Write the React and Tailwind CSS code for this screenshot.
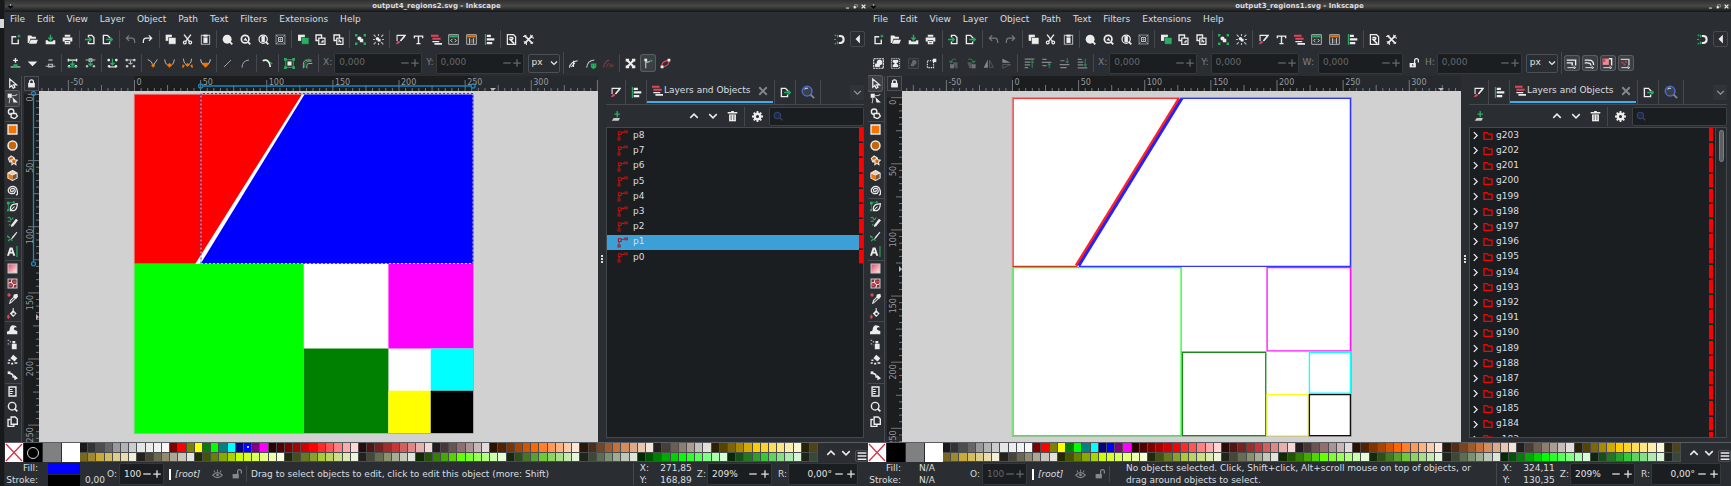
import React from "react";

const W = "#ececec";
const G = "#27ae60";
const R = "#e0455a";
const O = "#f67400";
const D = "#777b7f";

const mag = (
  <path d="M11 11l4 4" stroke={W} strokeWidth="2.6" />
);
const chain = (c) => (
  <g fill={c}>
    <circle cx="3" cy="12" r="1.8" />
    <circle cx="13" cy="12" r="1.8" />
  </g>
);

const ICONS = {
  new: <><path d="M9 4H3v10h9V8" stroke={W} strokeWidth="2" /><path d="M13 0l1 2 2 1-2 1-1 2-1-2-2-1 2-1z" fill={G} /></>,
  open: <><path d="M1 13V2h5l2 2h5v3H5l-2 6z" fill={W} /><path d="M5.500 8.500H16L13.500 14H3z" fill={W} /></>,
  save: <><path d="M8 1v6M5 5l3 3.500L11 5" stroke={G} strokeWidth="2" /><path d="M1 9h3l1 2h6l1-2h3v6H1z" fill={W} /></>,
  print: <><path d="M4 1h8v3H4z M1 5h14v6h-3V9H4v2H1z M4 10h8v5H4z" fill={W} /><path d="M6 12.500h4" stroke="#2a2e32" /></>,
  import: <><path d="M5 5V2h5l3 3v9H5v-3" stroke={W} strokeWidth="2" /><path d="M0 8h8M6 5l3 3-3 3" stroke={G} strokeWidth="2" /></>,
  export: <><path d="M11 6V5L8 2H2v12h9v-3" stroke={W} strokeWidth="2" /><path d="M6 8h8M12 5l3 3-3 3" stroke={G} strokeWidth="2" /></>,
  undo: <path d="M2 6h8q4 0 4 5v2 M6 2L2 6l4 4" stroke={D} strokeWidth="1.800" />,
  redo: <path d="M14 6H6q-4 0-4 5v2 M10 2l4 4-4 4" stroke={W} strokeWidth="1.800" />,
  redoOff: <path d="M14 6H6q-4 0-4 5v2 M10 2l4 4-4 4" stroke={D} strokeWidth="1.800" />,
  copy: <><path d="M1 1h9v9H1z" fill={W} /><path d="M5 5h11v10H5z" fill={W} stroke="#2a2e32" /></>,
  cut: <><path d="M3 1l8 10M13 1L5 11" stroke={W} strokeWidth="2" /><circle cx="4" cy="12.500" r="2" stroke={W} strokeWidth="1.800" /><circle cx="12" cy="12.500" r="2" stroke={W} strokeWidth="1.800" /></>,
  paste: <><path d="M2 2h12v13H2z" stroke="#b0b2b4" strokeWidth="1.600" /><path d="M5 1h6v3H5z" fill={W} /><path d="M5 5h6v8H5z" fill={W} /></>,
  zoomSel: <><circle cx="7.500" cy="7.500" r="6.500" fill={W} />{mag}</>,
  zoomDraw: <><circle cx="7.500" cy="7.500" r="5.500" stroke={W} strokeWidth="2.500" /><path d="M5 9l3-4 3 5z" fill={W} />{mag}</>,
  zoomPage: <><circle cx="7.500" cy="7.500" r="6" stroke={W} strokeWidth="1.800" /><path d="M5 3h5v9H5z" fill={W} />{mag}</>,
  zoomCenter: <><path d="M1.500 1.500h13v13h-13z" stroke="#b0b2b4" /><path d="M5 5h6v6H5z" stroke={W} strokeWidth="1.200" /><path d="M1 1l3 3M15 1l-3 3M1 15l3-3M15 15l-3-3M8 6v4M6 8h4" stroke="#b0b2b4" /></>,
  dup: <><path d="M0 1h10v9H0z" fill={W} /><path d="M5 5h11v10H5z" fill={G} stroke="#2a2e32" /></>,
  clone: <><path d="M1.500 1.500h8v8h-8z" stroke={W} strokeWidth="2" /><path d="M5.500 6h9v9h-9z" fill="#2a2e32" stroke={W} strokeWidth="1.800" /><path d="M9 12l3-3v3z" fill={W} stroke={W} /></>,
  unlink: <><path d="M1.500 1.500h8v8h-8z" stroke={W} strokeWidth="2" /><path d="M5.500 6h9v9h-9z" fill="#2a2e32" stroke={W} strokeWidth="1.800" /><path d="M8 8l4 4M8 12l1-1" stroke={W} strokeWidth="2" /></>,
  group: <><path d="M0 0h3.500v3.500H0zM12.500 0H16v3.500h-3.500zM0 12.500h3.500V16H0zM12.500 12.500H16V16h-3.500z" fill={G} /><circle cx="6.500" cy="6.500" r="3" fill={W} /><path d="M7 7h5v5H7z" fill={W} /></>,
  ungroup: <><path d="M1 1l3 3M15 1l-3 3M15 15l-3-3M1 15l3-3M8 0v3M0 8h3M13 8h3M8 13v3" stroke="#b8babc" strokeWidth="1.600" /><circle cx="6.500" cy="7" r="2.500" fill={W} /><path d="M7 7h4v4H7z" fill={W} /></>,
  fill: <><path d="M3 10V2h12l-7 8" stroke={W} strokeWidth="1.600" /><path d="M8 10l6-7" stroke={W} strokeWidth="2.200" /><path d="M1 15l3-5 4 1q-2 4-7 4z" fill={R} /></>,
  text: <path d="M1 2h14v4h-2V4H9v9h2v2H5v-2h2V4H3v2H1z" fill={W} />,
  layers: <><path d="M0 1h11v3H0z M2 5.500h12v3H2z" fill={R} /><path d="M2 10h10v2H2z M5 13h11v2.500H5z" fill={W} /></>,
  xml: <><path d="M1 1h14v14H1z" stroke="#b8babc" strokeWidth="1.400" /><path d="M2 2h12v3H2z" fill={G} /><path d="M6.500 7L4 9.500 6.500 12M9.500 7L12 9.500 9.500 12" stroke={W} strokeWidth="1.300" /></>,
  doc: <><path d="M1 1h14v14H1z" stroke="#b8babc" strokeWidth="1.400" /><path d="M2 2h12v3H2z" fill={O} /><path d="M5 6v8M11 6v8" stroke={W} strokeWidth="1.200" /><path d="M6 7h4v6H6z" fill="#54585c" /></>,
  align: <><path d="M2 0v16" stroke={G} strokeWidth="1.600" /><path d="M4 1h6v3.500H4z M4 6h11v3.500H4z M4 11.500h8V15H4z" fill={W} /></>,
  prefs: <><path d="M2 1h9l3 3v11H2z" stroke={W} strokeWidth="1.800" /><path d="M5 5h4q2 1 0 3H6l6 6" stroke={W} strokeWidth="2.200" /></>,
  tools: <><path d="M2 2l12 12M14 2L2 14" stroke={W} strokeWidth="2.400" /><path d="M0 4l5-2M11 1l1 4 4 1M1 11l4 1v4M11 14l4-2" stroke={W} strokeWidth="1.400" /></>,
  snap: <><path d="M7 3h2q5 0 5 5t-5 5H7" stroke={W} strokeWidth="3" /><path d="M1 1l2 2M0 8h3M1 15l2-2M5 1v4M5 11v4" stroke={G} strokeWidth="1.600" /></>,
  left: <path d="M11 1v14L4 8z" fill={W} />,
  nodeAdd: <><path d="M8 0v7M4.500 3.500h7" stroke={W} strokeWidth="2" /><path d="M1 13h14" stroke={W} strokeWidth="1.400" /><path d="M5 9h6v5H5z" fill={G} /></>,
  tri: <path d="M1 5h14l-7 7z" fill={W} />,
  nodeDel: <><path d="M5 3h6" stroke="#b8babc" strokeWidth="1.800" /><path d="M1 12h14M5 9h6v4H5z" stroke="#b8babc" strokeWidth="1.600" /></>,
  join: <><path d="M1 3h14M2 1v4M14 1v4" stroke={W} strokeWidth="2" /><path d="M8 4v7M5 8l3 3 3-3" stroke={G} strokeWidth="2" />{chain(W)}<path d="M1 13h14" stroke={G} strokeWidth="1.600" /></>,
  breakN: <><path d="M1 3h14M6 1h4v4H6z" stroke="#b8babc" strokeWidth="1.600" /><path d="M8 4v7M5 8l3 3 3-3" stroke={G} strokeWidth="1.800" />{chain("#b8babc")}</>,
  joinSeg: <><g fill={W}><circle cx="2.500" cy="3" r="2" /><circle cx="13.500" cy="3" r="2" /></g><path d="M8 1v9M5 7l3 3 3-3" stroke={G} strokeWidth="1.800" />{chain(W)}<path d="M3 13h10" stroke={W} strokeWidth="1.600" /></>,
  delSeg: <><g fill="#c8cacc"><circle cx="2.500" cy="3" r="2" /><circle cx="13.500" cy="3" r="2" /></g><path d="M3 3h10M8 4v5M5 7l3 2 3-2" stroke="#b8babc" strokeWidth="1.500" />{chain("#c8cacc")}</>,
  cusp: <><path d="M1 2q6 2 8 9l6-9" stroke="#b8babc" strokeWidth="1.400" /><path d="M9 8l3 3-3 3-3-3z" fill={O} /></>,
  smooth: <><path d="M1 2q1 9 7 9t7-9" stroke="#b8babc" strokeWidth="1.400" /><path d="M8 7l3.500 3.500L8 14l-3.500-3.500z" fill={O} /></>,
  sym: <><path d="M2 1q1 9 6 9t6-9" stroke="#b8babc" strokeWidth="1.400" /><path d="M8 7l3 3-3 3-3-3zM1 9l3 2-2 3H0zM15 9l-3 2 2 3h2z" fill={O} /></>,
  auto: <><path d="M1 2q1 8 7 8t7-8" stroke="#d8dadc" strokeWidth="1.400" /><path d="M8 14L3 9l2-2h6l2 2z" fill={O} /></>,
  line: <path d="M3 13L13 3" stroke="#a8aaac" strokeWidth="1.400" />,
  curve: <path d="M3 14Q3 4 13 3" stroke="#a8aaac" strokeWidth="1.400" />,
  corner: <><path d="M1 4q5-2 8 1t3 8" stroke={W} strokeWidth="2.400" /><path d="M12 6l3 3" stroke={G} strokeWidth="1.600" /></>,
  objPath: <><path d="M2.500 2.500h11v11h-11z" stroke={G} strokeWidth="1.400" /><path d="M0 0h4v4H0zM12 0h4v4h-4zM0 12h4v4H0zM12 12h4v4h-4z" fill={G} /><path d="M5 5h6v6H5z" fill={W} /></>,
  strokePath: <><path d="M2 15V9q0-6 6-6h6M7 15v-4q0-3 3-3h5" stroke="#a8aaac" strokeWidth="1.400" /><path d="M4 14v-4q0-5 6-5h4M6 2l2 3M10 1v4" stroke={G} strokeWidth="1.400" /></>,
  pathA: <><path d="M2 14Q4 5 14 4" stroke={W} strokeWidth="1.500" /><path d="M8 4v9M5 13l5-6" stroke={W} strokeWidth="1.500" /></>,
  pathB: <><path d="M1 14Q2 4 12 3" stroke="#c8cacc" strokeWidth="1.500" /><path d="M7 8h8v4q-1 4-4 4t-4-4z" fill={G} /><path d="M9 10v1.500M13 10v1.500" stroke="#2a2e32" /></>,
  pathC: <><path d="M1 14Q2 5 9 3" stroke="#7c4046" strokeWidth="1.500" /><path d="M5 14l3-7M10 8v6M13 8v6M11 11h5" stroke="#7c2f36" strokeWidth="1.500" /></>,
  xform: <><path d="M3 3l10 10M13 3L3 13" stroke={W} strokeWidth="3" /><path d="M1 1h5v4H1zM10 1h5v4h-5zM1 11h5v4H1zM10 11h5v4h-5z" fill={W} /></>,
  handles: <><path d="M4 15V5q1 2 6 0" stroke="#c8cacc" strokeWidth="1.600" /><path d="M2 1h4v4H2z" fill={W} /><circle cx="12" cy="4" r="1.600" fill={G} /></>,
  outline: <><path d="M3 13Q1 5 13 3q1 9-10 10z" stroke={R} strokeWidth="1.800" /><path d="M1 11h4v4H1zM11 1h4v4h-4z" fill={W} /></>,
  selAll: <><path d="M1 1h14v14H1z" stroke={W} strokeWidth="1.600" strokeDasharray="3 1" /><circle cx="9.500" cy="6.500" r="4" fill={W} /><path d="M3 8h7v5H3z" fill={W} /></>,
  selLayers: <><path d="M2 1h12v14H2z" stroke="#c8cacc" strokeWidth="1.400" strokeDasharray="2 1" /><path d="M4 3h8v3l-3 2 3 2v3H4v-3l3-2-3-2z" fill={W} /></>,
  desel: <><path d="M1 1h14v14H1z" stroke="#55595d" strokeWidth="1.400" strokeDasharray="3 1" /><circle cx="9" cy="6.500" r="3.500" fill="#65696d" /><path d="M4 8h5v4H4z" fill="#65696d" /></>,
  rubber: <><path d="M2 4h9v10H2z" stroke={W} strokeWidth="1.600" strokeDasharray="2 1.500" /><path d="M10 1h5v5h-5z" fill={W} /></>,
  rotL: <><path d="M3 9h6v6H3z" fill="#6f7377" /><path d="M7 6h7v9h-3z" fill="#55595d" /><path d="M12 2Q6 0 4 6M2 4l2 3 3-2" stroke="#2e7f52" strokeWidth="1.500" /></>,
  rotR: <><path d="M8 9h6v6H8z" fill="#6f7377" /><path d="M2 6h6v9H5z" fill="#55595d" /><path d="M3 2q6-2 8 4M9 5l2 2 3-3" stroke="#2e7f52" strokeWidth="1.500" /></>,
  flipH: <><path d="M7 2v12H1z" fill="#85898d" /><path d="M9.500 3v10.500H15z" stroke="#65696d" /></>,
  flipV: <><path d="M2 7V1l12 6z" fill="#85898d" /><path d="M2.500 9.500V15L14 9.500z" stroke="#65696d" /></>,
  raiseTop: <><path d="M1 1.500h14M1 6h8M1 10h8M1 14h5" stroke="#85898d" strokeWidth="1.800" /><path d="M12 15V5M10 7l2-3 2 3" stroke="#2e7f52" strokeWidth="1.600" /></>,
  raise: <><path d="M2 2h6M1 6.500h14M2 11h6" stroke="#85898d" strokeWidth="1.800" /><path d="M12 15V8M10 10l2-2 2 2" stroke="#2e7f52" strokeWidth="1.600" /></>,
  lower: <><path d="M2 4h6M1 9.500h14M2 14h9" stroke="#85898d" strokeWidth="1.800" /><path d="M12 0v7M10 5l2 2 2-2" stroke="#2e7f52" strokeWidth="1.600" /></>,
  lowerBot: <><path d="M1 2h6M1 6h8M1 10h8M1 14.500h14" stroke="#85898d" strokeWidth="1.800" /><path d="M12 1v10M10 9l2 3 2-3" stroke="#2e7f52" strokeWidth="1.600" /></>,
  unlock: <><path d="M1 8h10v7H1z" fill={W} /><path d="M9 8V4q0-3 3-3t3 3v3" stroke={W} strokeWidth="2" /><path d="M6 10v3" stroke="#2a2e32" strokeWidth="1.500" /></>,
  lock: <><path d="M2 7h12v8H2z" fill={W} /><path d="M4.500 8V5q0-3.500 3.500-3.500T11.500 5v3" stroke={W} strokeWidth="2.200" /></>,
  scaleStroke: <><path d="M1 3h13v8M1 7h8v4" stroke={W} strokeWidth="2" /><path d="M2 14h10M11 12l3 2-3 2" stroke={W} strokeWidth="1.300" /></>,
  scaleCorner: <><path d="M1 3h6q7 0 7 7M1 7h4q5 0 5 4" stroke={W} strokeWidth="2" /><path d="M2 14h10M11 12l3 2-3 2" stroke={W} strokeWidth="1.300" /></>,
  moveGrad: <><path d="M1 1h9v9H1z" fill="#f08b96" /><path d="M1 1h4v5H1z" fill={R} /><path d="M10 1h4v10" stroke={W} strokeWidth="2" /><path d="M2 14h10M11 12l3 2-3 2" stroke={W} strokeWidth="1.300" /></>,
  movePat: <><path d="M1 2h12v9" stroke="#c8cacc" strokeWidth="2" /><path d="M2 5h3v3H2zM7 4h3v3H7zM5 8h3v3H5z" fill="#a8424e" /><path d="M2 14h10M11 12l3 2-3 2" stroke={W} strokeWidth="1.300" /></>,
  arrow: <path d="M4 1.500v12l3-2.500 2 4 2.500-1.500-2-3.500H14z" stroke={W} strokeWidth="1.800" />,
  node: <><path d="M1 1h6v6H1z" fill={W} /><path d="M7 4q6 0 8-2M4 7q0 6 -1 8" stroke="#b8babc" strokeWidth="1.500" /><path d="M9 8l5 5h-4z" fill={W} stroke={W} strokeWidth="1.500" /></>,
  shapeB: <><circle cx="6" cy="5.500" r="4" stroke={W} strokeWidth="2" /><path d="M6 8h7l2 4-4 3.500-5-2z" fill="#2a2e32" stroke={W} strokeWidth="2" /></>,
  rect: <path d="M1.500 1.500h13v13h-13z" fill={O} stroke={W} strokeWidth="2" />,
  circle: <circle cx="8" cy="8" r="6.500" fill="#c8640c" stroke={W} strokeWidth="2.200" />,
  star: <><path d="M2 5l4-3.500L10 4l-1 6H4z" fill="#c8640c" stroke={W} strokeWidth="1.600" /><path d="M10 4l1.500 3 3.500.500-2.500 2.500.5 4-3-2-3 2 .5-4L5 7.500 8.500 7z" fill="#c8640c" stroke={W} strokeWidth="1.500" /></>,
  box: <><path d="M8 1l6.500 3.500v7L8 15l-6.500-3.500v-7z" fill="#fff" stroke={W} strokeWidth="2" /><path d="M2 5l6 3v6.500l-6-3z" fill={O} /><path d="M14 5L8 8v6.500l6-3z" fill="#7d5638" /><path d="M8 2l5 2.500-5 2.500-5-2.500z" fill="#e8c8a8" /></>,
  spiral: <path d="M8 8q1.500-1 1 1t-3.500 0Q4 5.500 8 5t4 4.500q-1 4-6 3T2 6.500Q4 1.500 9 2t6 7-2 5" stroke={W} strokeWidth="1.800" />,
  pen: <><path d="M5 14q-1-7 4-9l6-1q0 8-5 10z" stroke={W} strokeWidth="1.800" /><path d="M6 13l5-5" stroke={W} strokeWidth="1.500" /><path d="M0 1h4v4H0zM0 12h3v3H0zM9 0h2v3H9z" fill={G} /><path d="M2 4v9M4 2h6" stroke={G} /></>,
  pencil: <><path d="M6 13L13 4l3 2-7 9-3 1z" fill={W} /><path d="M1 3q3-3 4 1t4-2M1 8q3-2 4 1M3 12l2 2" stroke={G} strokeWidth="1.600" /></>,
  calli: <><path d="M14 1L8 8l-3 5 4-3 6-8z" fill={W} /><path d="M0 7l4 3M2 15q2-5 6-1" stroke={G} strokeWidth="2" /></>,
  textTool: <><path d="M0 14L4 2h4l4 12H9l-1-3H4l-1 3zM5 8.500h2.500L6.200 5z" fill={W} fillRule="evenodd" /><path d="M14.500 0v16" stroke={G} strokeWidth="1.600" /></>,
  grad: <><path d="M1.500 1.500h13v13h-13z" fill="url(#gradTool)" stroke="#c8cacc" strokeWidth="1.500" /></>,
  mesh: <><path d="M1.500 1.500h13v13h-13z" fill="#7a3038" stroke="#c8cacc" strokeWidth="1.500" /><path d="M8 2q-3 3 0 6t0 6M2 8q3-3 6 0t6 0" stroke="#ffd8dc" strokeWidth="1.500" /><path d="M9 4h4v3H9zM3 9h4v3H3z" fill={R} /></>,
  dropper: <><path d="M4 15l1-4 5-5 2 2-5 5z" stroke={W} strokeWidth="1.500" /><path d="M10 2l5-1 1 4-3 4-4-4z" fill={W} /><circle cx="3" cy="3" r="2.500" fill={R} /></>,
  bucket: <><path d="M9 3l5 5-5 5-5-5z" fill={W} /><path d="M9 0v5" stroke={W} strokeWidth="1.500" /><path d="M8 7h3v3H8z" fill="#2a2e32" /><path d="M2 9q4 5 0 7-4-2 0-7z" fill={R} /></>,
  tweak: <path d="M0 15v-4q4 0 4-4 1-6 6-5 4 0 4 3-4-1-4 2 0 2 5 3v5z" fill={W} />,
  spray: <><path d="M7 7h7v8H7zM8 3h4v3H8z" fill={W} /><path d="M1 1h2v2H1zM4 3h2v2H4zM1 6h2v2H1zM4 8h1v1H4z" fill="#a8aaac" /></>,
  eraser: <><path d="M9 1l6 5-4 5-6-5z" fill={W} /><path d="M1 13h3M6 14h3M11 13h4M2 9h3" stroke={W} strokeWidth="2.200" /></>,
  connector: <><path d="M1 2h4v4H1z" fill={W} /><path d="M4 5q5 0 5 5h4" stroke={W} strokeWidth="2.200" /><path d="M10 7l6 5-5 3z" fill={W} /></>,
  measure: <><path d="M3 1.500h10v13H3z" stroke={W} strokeWidth="2" /><path d="M4 5h4M4 8h5M4 11h4" stroke={W} strokeWidth="1.500" /></>,
  zoomTool: <><circle cx="7.500" cy="7.500" r="5.500" stroke={W} strokeWidth="2" /><path d="M11 11l4 4" stroke={W} strokeWidth="2.600" /></>,
  pages: <><path d="M6 1.500h6l3 3V12H6z" stroke={W} strokeWidth="2" /><path d="M5 5H1.500v10H10v-2" stroke={W} strokeWidth="2" /></>,
  search: <><circle cx="7" cy="7" r="5.500" fill="#3a3f4c" stroke="#4a6bc4" strokeWidth="1.800" /><path d="M4 5q2-2 4-1" stroke="#c0c8dc" strokeWidth="1.400" /><path d="M11 11l4 4" stroke="#85898d" strokeWidth="2" /></>,
  searchDim: <><circle cx="7" cy="7" r="5" fill="#23283a" stroke="#2e3f74" strokeWidth="2" /><path d="M11 11l4 4" stroke="#45494d" strokeWidth="2" /></>,
  up: <path d="M2 11l6-6 6 6" stroke={W} strokeWidth="2.400" />,
  down: <path d="M2 5l6 6 6-6" stroke={W} strokeWidth="2.400" />,
  downDim: <path d="M2 5l6 6 6-6" stroke="#989c9f" strokeWidth="2" />,
  right: <path d="M5 2l6 6-6 6" stroke={W} strokeWidth="2.200" />,
  close: <path d="M2 2l12 12M14 2L2 14" stroke="#85898d" strokeWidth="3" />,
  addLayer: <><path d="M9 0v9M5 4.500h8" stroke={G} strokeWidth="2" /><path d="M4 10h9l-2 4H1z" fill="#c8cacc" /></>,
  trash: <><path d="M1 2.500h14M6 1h4" stroke={W} strokeWidth="2" /><path d="M3 5h10v10H3z" fill={W} /><path d="M6 6v7M10 6v7" stroke="#2a2e32" /></>,
  gear: <><circle cx="8" cy="8" r="4" stroke={W} strokeWidth="3.500" /><path d="M8 0v3M8 13v3M0 8h3M13 8h3M2.500 2.500l2 2M11.500 11.500l2 2M2.500 13.500l2-2M11.500 4.500l2-2" stroke={W} strokeWidth="2.600" /></>,
  pathItem: <><path d="M3 11V7M6 4q3 0 5-1.500" stroke="#e01010" strokeWidth="1.500" /><path d="M1.500 11.500h3v3h-3zM2 2.500h4v4H2zM11.500 1.500h3.500v2.500h-3.500z" stroke="#b81212" strokeWidth="1.500" /></>,
  folder: <path d="M1.500 13.500v-11h5l2 2.500h6v8.500z" stroke="#f00" strokeWidth="2" />,
  eye: <><path d="M1 9q7-8 14 0-7 7-14 0z" stroke="#85898d" strokeWidth="1.600" /><circle cx="8" cy="8.500" r="2" fill="#85898d" /><path d="M8 1v3M3 2l1 3M13 2l-1 3" stroke="#85898d" strokeWidth="1.400" /></>,
  unlockDim: <><path d="M1 8h10v7H1z" fill="#85898d" /><path d="M9 8V4q0-3 3-3t3 3v3" stroke="#85898d" strokeWidth="2" /></>,
  menu: <path d="M1 3h14M1 8h14M1 13h14" stroke={W} strokeWidth="2.400" />,
  minus: <path d="M2 8h12" stroke="currentColor" strokeWidth="2" />,
  plus: <path d="M2 8h12M8 2v12" stroke="currentColor" strokeWidth="2" />,
  min: <path d="M3 13h10" stroke={W} strokeWidth="3" />,
  max: <><path d="M5 2h9v8H5z" stroke="#a8aaac" strokeWidth="2" /><path d="M2 7h7v7H2z" fill={W} /></>,
  x: <path d="M2 2l12 12M14 2L2 14" stroke={W} strokeWidth="4" />,
  app: <><path d="M8 1l7 7-7 7-7-7z" fill="#0c0e10" stroke="#555" /><path d="M8 2l3 3-3 1-3-1z" fill="#c8d0dc" /></>,
};

function Icon({ name, className = "size-3" }) {
  return (
    <svg viewBox="0 0 16 16" fill="none" aria-hidden="true" className={`${className} shrink-0`}>
      {ICONS[name]}
    </svg>
  );
}

function Tool({ name, active, className = "h-[16px] w-[14px]", icon = "size-[11px]" }) {
  return (
    <button
      type="button"
      aria-label={name}
      className={`flex shrink-0 items-center justify-center rounded-xs ${className} ${active ? "bg-[#3c4044] ring-1 ring-[#5a5e62]" : ""}`}
    >
      <Icon name={name} className={icon} />
    </button>
  );
}

const Sep = ({ className = "h-[22px]" }) => <span className={`w-px shrink-0 bg-[#45494d] ${className}`} />;

function ToolStrip({ items, className }) {
  return (
    <div className={`flex shrink-0 items-center justify-between ${className}`}>
      {items.map((n, i) => (n === "|" ? <Sep key={i} className="h-[18px]" /> : <Tool key={i} name={n.replace("*", "")} active={n.endsWith("*")} />))}
    </div>
  );
}

function Spin({ id, label, value, disabled, className, gap = "gap-1", minusOn, align = "" }) {
  const tone = disabled ? "text-[#64686c]" : "text-[#e4e4e4]";
  return (
    <div className={`flex shrink-0 items-center ${gap}`}>
      <label htmlFor={id} className={disabled && !minusOn ? "text-[#7c8084]" : "text-[#d4d6d8]"}>{label}</label>
      <div className={`flex items-center rounded-xs border border-[#36393c] bg-[#1b1e20] pr-px pl-1 ${tone} ${className}`}>
        <input id={id} defaultValue={value} disabled={disabled} className={`w-0 min-w-0 flex-1 bg-transparent outline-none ${align}`} />
        <button type="button" aria-label={`Decrease ${label}`} disabled={disabled} className="flex">
          <Icon name="minus" className="size-[10px]" />
        </button>
        <button type="button" aria-label={`Increase ${label}`} disabled={disabled} className="flex">
          <Icon name="plus" className="size-[10px]" />
        </button>
      </div>
    </div>
  );
}

function UnitSelect() {
  return (
    <div className="relative ml-1 flex shrink-0 items-center">
      <select aria-label="Units" defaultValue="px" className="h-[19px] w-8 appearance-none rounded-xs border border-[#4c5054] bg-[#2a2e32] pl-[3px] text-[#e4e4e4]">
        <option>px</option>
        <option>mm</option>
      </select>
      <span className="pointer-events-none absolute right-[2px]">
        <Icon name="down" className="size-2" />
      </span>
    </div>
  );
}

const SCALE = 1.3225;
const STEPS = Array.from({ length: 100 }, (_, i) => (i - 20) * 5);

function HRuler({ zero, sel, cursor }) {
  return (
    <svg className="h-[15px] w-0 min-w-0 flex-1 bg-[#26292d]" aria-hidden="true">
      <rect x={zero} y="0" width={256 * SCALE} height="15" fill="#1b1d1e" />
      {STEPS.map((v) => {
        const x = zero + v * SCALE;
        const h = v % 50 === 0 ? 11 : v % 25 === 0 ? 6 : 3;
        return <path key={v} d={`M${x} 15v${-h}`} stroke="#74787b" />;
      })}
      {STEPS.filter((v) => v % 50 === 0 && v >= -50 && v <= 300).map((v) => (
        <text key={v} x={zero + v * SCALE + 2} y="9" fontSize="8" fill="#979b9e">{v}</text>
      ))}
      {sel && (
        <g stroke="#1d86c4" fill="none" strokeWidth="1.300">
          <path d={`M${zero + 50 * SCALE + 2} 10H${zero + 256 * SCALE - 2}`} />
          <circle cx={zero + 50 * SCALE} cy="10" r="2" />
          <circle cx={zero + 256 * SCALE} cy="10" r="2" />
        </g>
      )}
      <path d={`M${cursor - 3} 12h6l-3 3z`} fill="#b8babc" />
    </svg>
  );
}

function VRuler({ zero, sel, cursor }) {
  return (
    <svg className="h-0 min-h-0 w-full flex-1 bg-[#26292d]" aria-hidden="true">
      <rect x="0" y={zero} width="15" height={256 * SCALE} fill="#1b1d1e" />
      {STEPS.filter((v) => v >= 0).map((v) => {
        const y = zero + v * SCALE;
        const h = v % 50 === 0 ? 11 : v % 25 === 0 ? 6 : 3;
        return <path key={v} d={`M15 ${y}h${-h}`} stroke="#74787b" />;
      })}
      {STEPS.filter((v) => v >= 0 && v <= 250 && v % 50 === 0).map((v) => (
        <text key={v} transform={`translate(9 ${zero + v * SCALE + 2}) rotate(-90)`} textAnchor="end" fontSize="8" fill="#979b9e">{v}</text>
      ))}
      {sel && (
        <g stroke="#1d86c4" fill="none" strokeWidth="1.300">
          <path d={`M9.500 ${zero + 1}V${zero + 128 * SCALE - 2}`} />
          <circle cx="9.500" cy={zero - 1} r="2" />
          <circle cx="9.500" cy={zero + 128 * SCALE} r="2" />
        </g>
      )}
      <path d={`M12 ${cursor - 3}v6l3-3z`} fill="#b8babc" />
    </svg>
  );
}

function FilledDrawing() {
  return (
    <svg className="h-full w-full" role="img" aria-label="Filled regions">
      <g transform="translate(95.500 3.500) scale(1.3225)">
        <rect x="-.5" y="-.5" width="257" height="257" fill="#9a9a9a" />
        <rect width="256" height="256" fill="#fff" />
        <path d="M0 0H126.500L46 128H0z" fill="#f00" />
        <path d="M128.500 0H256V128H50z" fill="#00f" />
        <path d="M0 128h128v128H0z" fill="#0f0" />
        <path d="M192 128h64v64h-64z" fill="#f0f" />
        <path d="M128 192h64v64h-64z" fill="#008000" />
        <path d="M224 192h32v32h-32z" fill="#0ff" />
        <path d="M192 224h32v32h-32z" fill="#ff0" />
        <path d="M224 224h32v32h-32z" fill="#000" />
      </g>
      <g fill="none" strokeDasharray="2 2">
        <path d="M162 2.500H434V172.500H162z" stroke="#c8c8f4" />
        <path d="M162 2.500H434V172.500H162z" stroke="#4040b0" strokeDashoffset="2" />
      </g>
    </svg>
  );
}

function OutlineDrawing() {
  return (
    <svg className="h-full w-full" role="img" aria-label="Outlined regions">
      <g transform="translate(110.500 6.700) scale(1.3225)" fill="none">
        <rect x="-.5" y="-.5" width="257" height="257" fill="#9a9a9a" />
        <rect width="256" height="256" fill="#fff" />
        <path d="M.5 127.500V.5H126" stroke="#f33" />
        <path d="M128 .5H255.500V127.500H50" stroke="#33f" />
        <path d="M0 127.500H49" stroke="#c63a1a" />
        <path d="M126.200 .5L48.200 127" stroke="#f22" strokeWidth="2.400" />
        <path d="M128.200 .5L50.200 127" stroke="#22f" strokeWidth="2.200" />
        <path d="M.5 128.500h127v127H.5z" stroke="#2f2" />
        <path d="M192.500 128.500h63v63h-63z" stroke="#f1f" />
        <path d="M128.500 192.500h63v63h-63z" stroke="#1a8a1a" />
        <path d="M224.500 192.500h31v31h-31z" stroke="#1ff" />
        <path d="M192.500 224.500h31v31h-31z" stroke="#ff1" />
        <path d="M224.500 224.500h31v31h-31z" stroke="#111" />
      </g>
    </svg>
  );
}

const ROW1 = "1a1a1a 333333 4d4d4d 666666 999999 b3b3b3 cccccc e6e6e6 ececec f2f2f2 f9f9f9 800000 ff0000 808000 ffff00 008000 00ff00 008080 00ffff 000080 0000ff 800080 ff00ff 2b0000 550000 800000 aa0000 d40000 ff0000 ff2a2a ff5555 ff8080 ffaaaa ffd5d5 280b0b 501616 782121 a02c2c c83737 d35f5f de8787 e9afaf f4d7d7 241c1c 483737 6c5353 916f6f ac9393 c8b7b7 e3dbdb 2b1100 552200 803300 aa4400 d45500 ff6600 ff7f2a ff9955 ffb380 ffccaa ffe6d5 28170b 502d16 784421 a05a2c c87137 d38d5f deaa87 e9c6af f4e3d7 241f1c 483e37 6c5d53 917c6f ac9d93 c8beb7 e3dedb 2b2200 554400 806600 aa8800 d4aa00 ffcc00 ffd42a ffdd55 ffe680 ffeeaa fff6d5 28220b 504416".split(" ");
const ROW2 = "786721 a0892c c8ab37 d3bc5f decd87 e9ddaf f4eed7 24221c 484537 6c6753 918a6f aca793 c8c4b7 e3e2db 222b00 445500 668000 88aa00 aad400 ccff00 d4ff2a ddff55 e5ff80 eeffaa f6ffd5 22280b 445016 677821 89a02c abc837 bcd35f cdde87 dde9af eef4d7 22241c 454837 676c53 8a916f a7ac93 c4c8b7 e2e3db 112b00 225500 338000 44aa00 55d400 66ff00 7fff2a 99ff55 b3ff80 ccffaa e5ffd5 17280b 2d5016 447821 5aa02c 71c837 8dd35f aade87 c6e9af e3f4d7 1f241c 3e4837 5d6c53 7c916f 9dac93 bec8b7 dee3db 002b00 005500 008000 00aa00 00d400 00ff00 2aff2a 55ff55 80ff80 aaffaa d5ffd5 0b280b 165016 217821 2ca02c 37c837 5fd35f 87de87 afe9af d7f4d7 1c241c 374837".split(" ");

function Swatches({ colors, marked }) {
  return (
    <div className="flex flex-1">
      {colors.map((c, i) => (
        <button
          key={i}
          type="button"
          aria-label={`#${c}`}
          className="flex flex-1 items-center justify-center border-r border-b border-[#4a4d50]"
          style={{ backgroundColor: `#${c}` }}
        >
          {marked === i && <span className="size-[2px] rounded-full bg-white" />}
        </button>
      ))}
    </div>
  );
}

function Palette({ filled }) {
  return (
    <div className="flex h-5 shrink-0 border-t border-[#5a5e62]">
      <div className="flex gap-px">
        <button type="button" aria-label="No paint" className="w-[18px] bg-white">
          <svg viewBox="0 0 18 19" className="h-full w-full" aria-hidden="true">
            <path d="M1 1l16 17M17 1L1 18" stroke="#d0354a" strokeWidth="1.300" />
          </svg>
        </button>
        <button type="button" aria-label="Black" className="flex w-[18px] items-center justify-center bg-black">
          {filled && <span className="size-3 rounded-full border border-[#d8d8d8]" />}
        </button>
        <button type="button" aria-label="Gray" className="w-[18px] bg-[#808080]" />
        <button type="button" aria-label="White" className="w-[18px] bg-white" />
      </div>
      <div className="flex flex-1 flex-col">
        <Swatches colors={ROW1} marked={filled ? 20 : -1} />
        <Swatches colors={ROW2} />
      </div>
      <div className="flex shrink-0 items-center gap-[3px] pl-[7px]">
        <Tool name="up" className="size-3" icon="size-[10px]" />
        <Tool name="down" className="size-3" icon="size-[10px]" />
        <Tool name="menu" className="h-3 w-[13px] self-end rounded-xs border border-[#4c5054]" icon="size-[10px]" />
      </div>
    </div>
  );
}

const MAIN = "new open save print | import export | undo redo | copy cut paste | zoomSel zoomDraw zoomPage zoomCenter | dup clone unlink | group ungroup | fill text layers xml doc align | prefs tools";
const NODE_BAR = "nodeAdd tri nodeDel | join breakN | joinSeg delSeg | cusp smooth sym auto | line curve | corner | objPath strokePath |".split(" ");
const SELECT_BAR = "selAll selLayers desel rubber | rotL rotR flipH flipV | raiseTop raise lower lowerBot |".split(" ");
const TOOLBOX = "arrow node shapeB | rect circle star box spiral | pen pencil calli textTool | grad mesh dropper bucket | tweak spray eraser connector | measure zoomTool pages".split(" ");

function NodeControls() {
  return (
    <>
      <ToolStrip items={NODE_BAR} className="w-[311px]" />
      <div className="flex shrink-0 items-center gap-1 pl-1">
        <Spin id="node-x" label="X:" value="0,000" disabled className="h-[21px] w-[88px]" gap="gap-[2px]" />
        <Spin id="node-y" label="Y:" value="0,000" disabled className="h-[21px] w-[88px]" gap="gap-[2px]" />
      </div>
      <UnitSelect />
      <Sep className="mx-[3px] h-[22px]" />
      <ToolStrip items={["pathA", "pathB", "pathC", "|", "xform", "handles*", "outline"]} className="w-[106px]" />
    </>
  );
}

function SelectControls() {
  return (
    <>
      <ToolStrip items={SELECT_BAR} className="w-[223px]" />
      <div className="flex shrink-0 items-center gap-1 pl-1">
        <Spin id="sel-x" label="X:" value="0,000" disabled className="h-[21px] w-[88px]" gap="gap-[2px]" />
        <Spin id="sel-y" label="Y:" value="0,000" disabled className="h-[21px] w-[88px]" gap="gap-[2px]" />
        <Spin id="sel-w" label="W:" value="0,000" disabled className="h-[21px] w-[85px]" gap="gap-[4px]" />
        <Tool name="unlock" className="h-4 w-[14px]" icon="size-[10px]" />
        <Spin id="sel-h" label="H:" value="0,000" disabled className="h-[21px] w-[85px]" gap="gap-[2px]" />
      </div>
      <UnitSelect />
      <Sep className="mx-[3px] h-[22px]" />
      <div className="flex gap-1">
        {["scaleStroke", "scaleCorner", "moveGrad", "movePat"].map((n) => (
          <Tool key={n} name={n} active className="size-[14px]" icon="size-[11px]" />
        ))}
      </div>
    </>
  );
}

function LayerRow({ name, group, selected }) {
  return (
    <li className="flex min-h-0">
      <button type="button" className={`flex min-w-0 flex-1 items-center text-left ${selected ? "bg-[#3c9fd6]" : ""}`}>
        {group ? (
          <>
            <span className="flex w-[10px] justify-center"><Icon name="right" className="size-[9px]" /></span>
            <span className="flex w-[16px] justify-center"><Icon name="folder" className="size-[10px]" /></span>
          </>
        ) : (
          <span className="flex w-[26px] justify-end pr-[5px]"><Icon name="pathItem" className="size-[11px]" /></span>
        )}
        <span>{name}</span>
      </button>
      <span className="mb-px w-1 shrink-0 border-b border-[#7a0c0c] bg-[#f00]" />
    </li>
  );
}

function LayersPanel({ group }) {
  const names = group
    ? Array.from({ length: 21 }, (_, i) => `g${203 - i}`)
    : Array.from({ length: 9 }, (_, i) => `p${8 - i}`);
  return (
    <aside className="mr-1 flex w-[258px] shrink-0 flex-col pt-1">
      <div className="flex h-[25px] shrink-0 border-b border-[#45494d]">
        <button type="button" aria-label="Fill and Stroke" className="flex w-5 items-center justify-center border-r border-[#45494d]"><Icon name="fill" className="size-[11px]" /></button>
        <button type="button" aria-label="Align and Distribute" className="flex w-[21px] items-center justify-center border-r border-[#45494d]"><Icon name="align" className="size-[11px]" /></button>
        <button type="button" className="mb-px flex w-[126px] items-center justify-between border-b-2 border-[#3daee9] pr-[5px] pl-[5px] text-[9px]">
          <span className="flex items-center gap-px"><Icon name="layers" className="size-[11px]" />Layers and Objects</span>
          <Icon name="close" className="size-[10px]" />
        </button>
        <button type="button" aria-label="Export" className="ml-px flex w-[22px] items-center justify-center border-r border-l border-[#45494d]"><Icon name="export" className="size-[11px]" /></button>
        <button type="button" aria-label="Find" className="flex w-[25px] items-center justify-center border-r border-[#45494d]"><Icon name="search" className="size-[14px]" /></button>
        <button type="button" aria-label="More dialogs" className="my-auto ml-auto flex h-[15px] w-[14px] items-center justify-center bg-[#303438]"><Icon name="downDim" className="size-[9px]" /></button>
      </div>
      <div className="flex h-[22px] shrink-0 items-center">
        <Tool name="addLayer" className="ml-[3px] h-4 w-[14px]" icon="size-[11px]" />
        <div className="ml-auto flex items-center gap-[5px]">
          <Tool name="up" icon="size-[10px]" />
          <Tool name="down" icon="size-[10px]" />
          <Tool name="trash" icon="size-[11px]" />
          <Sep className="h-[19px]" />
          <Tool name="gear" icon="size-[11px]" />
        </div>
        <label className="ml-[5px] flex h-[19px] w-[95px] items-center gap-1 rounded-xs border border-[#3d4145] bg-[#1b1e20] px-[3px]">
          <Icon name="searchDim" className="size-[10px]" />
          <input aria-label="Search layers" className="w-0 flex-1 bg-transparent outline-none" />
        </label>
      </div>
      <div className="mb-1 flex min-h-0 flex-1 overflow-hidden border border-[#45494d] bg-[#1b1e20]">
        <ul className={`grid flex-1 auto-rows-fr ${group ? "h-[319px]" : "h-[137px]"}`}>
          {names.map((n) => <LayerRow key={n} name={n} group={group} selected={n === "p1"} />)}
        </ul>
        {group && (
          <div className="ml-[2px] w-[11px] border-l border-[#45494d] bg-[#26292c] pt-[2px]">
            <div className="mx-auto h-8 w-[5px] rounded-full border border-[#7c8084] bg-[#5c6064]" />
          </div>
        )}
      </div>
    </aside>
  );
}

function StatusBar({ id, filled, x, y, hint }) {
  return (
    <footer className="flex h-6 shrink-0 items-center leading-[12px]">
      <div className="grid w-[33px] shrink-0 grid-rows-2 text-right">
        <span>Fill:</span>
        <span>Stroke:</span>
      </div>
      {filled ? (
        <div className="ml-[10px] flex w-[59px] shrink-0 items-end gap-[5px]">
          <div className="flex w-8 flex-col gap-px">
            <button type="button" aria-label="Fill colour" className="h-[11px] bg-[#00f]" />
            <button type="button" aria-label="Stroke colour" className="h-[11px] bg-black" />
          </div>
          <span>0,00</span>
        </div>
      ) : (
        <div className="ml-[18px] grid w-[51px] shrink-0 grid-rows-2">
          <span>N/A</span>
          <span>N/A</span>
        </div>
      )}
      <Spin id={`${id}-opacity`} label="O:" value="100" disabled={!filled} minusOn className="h-[22px] w-[45px]" gap="gap-[2px]" />
      <span className="mr-1 ml-[5px] h-[11px] w-[2px] shrink-0 bg-white" />
      <button type="button" className="w-[36px] shrink-0 text-left italic">[root]</button>
      <Tool name="eye" className="size-[13px]" icon="size-[11px]" />
      <Tool name="unlockDim" className="ml-[7px] size-[13px]" icon="size-[10px]" />
      <Sep className="ml-[2px] h-4" />
      <p className={`min-w-0 flex-1 ${filled ? "pl-1" : "pr-5 pl-4"}`}>{hint}</p>
      <Sep className="h-[22px]" />
      <dl className="ml-[6px] grid w-[52px] shrink-0 grid-cols-[18px_1fr]">
        <dt>X:</dt><dd className="text-right">{x}</dd>
        <dt>Y:</dt><dd className="text-right">{y}</dd>
      </dl>
      <div className="mr-[10px] ml-[5px] flex shrink-0 gap-[6px]">
        <Spin id={`${id}-zoom`} label="Z:" value="209%" className="h-[22px] w-[65px] gap-[2px]" gap="gap-px" />
        <Spin id={`${id}-rot`} label="R:" value="0,00°" align="text-right" className="h-[22px] w-[70px] gap-[2px]" gap="gap-px" />
      </div>
    </footer>
  );
}

function InkscapeWindow({ id, title, filled, x, y, hint }) {
  const bar = filled ? MAIN : MAIN.replace("redo ", "redoOff ");
  return (
    <section className="flex h-full min-w-0 flex-1 flex-col overflow-hidden bg-[#2a2e32] text-[9px] text-[#dcdee0]">
      <header className="grid h-3 shrink-0 grid-cols-[1fr_auto_1fr] items-center bg-linear-to-b from-[#303030] via-[#484848] to-[#161616] px-[2px] text-[7px] font-bold">
        <Icon name="app" className="size-[7px]" />
        <h1>{title}</h1>
        <div className="flex justify-end gap-[3px]">
          {["min", "max", "x"].map((n) => (
            <button key={n} type="button" aria-label={n} className="flex"><Icon name={n} className="size-[5px]" /></button>
          ))}
        </div>
      </header>
      <nav className="flex h-4 shrink-0 items-center gap-[12px] pl-[5px]">
        {["File", "Edit", "View", "Layer", "Object", "Path", "Text", "Filters", "Extensions", "Help"].map((m) => (
          <button key={m} type="button">{m}</button>
        ))}
      </nav>
      <div className="flex h-[22px] shrink-0 items-center pr-[3px] pl-[3px]">
        <ToolStrip items={bar.split(" ")} className="w-[528px]" />
        <div className="ml-auto flex items-center gap-1">
          <Tool name="snap" />
          <Tool name="left" className="h-4 w-[15px] border border-[#45494d]" icon="size-[10px]" />
        </div>
      </div>
      <div className="flex h-[26px] shrink-0 items-center pl-[3px]">
        {filled ? <NodeControls /> : <SelectControls />}
      </div>
      <div className="flex min-h-0 flex-1">
        <div className="w-[17px] shrink-0 border-r border-[#45494d]">
          <div className="flex h-[353px] flex-col justify-between">
            {TOOLBOX.map((n, i) =>
              n === "|" ? (
                <span key={i} className="h-px bg-[#45494d]" />
              ) : (
                <Tool key={i} name={n} active={n === (filled ? "node" : "arrow")} className="h-[15px] w-[14px]" icon="size-[11px]" />
              ),
            )}
          </div>
        </div>
        <div className="ml-[2px] flex min-w-0 flex-1 flex-col">
          <div className="flex h-[15px]">
            <button type="button" aria-label="Lock guides" className="flex w-[15px] items-center justify-center border border-[#4c5054]"><Icon name="lock" className="size-[9px]" /></button>
            <HRuler zero={filled ? 95.5 : 110.5} sel={filled} cursor={filled ? 454 : 539} />
          </div>
          <div className="flex min-h-0 flex-1">
            <div className="flex w-[15px] flex-col">
              <VRuler zero={filled ? 3.5 : 6.7} sel={filled} cursor={filled ? 226 : 178} />
            </div>
            <div className="min-h-0 min-w-0 flex-1 overflow-hidden bg-[#d1d1d1]">
              {filled ? <FilledDrawing /> : <OutlineDrawing />}
            </div>
          </div>
        </div>
        <div className="flex w-2 shrink-0 flex-col items-center justify-center gap-px">
          <span className="size-[2px] bg-[#dcdee0]" />
          <span className="size-[2px] bg-[#dcdee0]" />
          <span className="size-[2px] bg-[#dcdee0]" />
        </div>
        <LayersPanel group={!filled} />
      </div>
      <Palette filled={filled} />
      <StatusBar id={id} filled={filled} x={x} y={y} hint={hint} />
    </section>
  );
}

export default function App() {
  return (
    <main className="flex h-screen bg-[#17191b] font-['DejaVu_Sans','Verdana',sans-serif]">
      <svg className="absolute size-0" aria-hidden="true">
        <defs>
          <linearGradient id="gradTool" x1="0" y1="0" x2="1" y2="1">
            <stop offset="0" stopColor="#e0455a" />
            <stop offset="1" stopColor="#fff0f2" />
          </linearGradient>
        </defs>
      </svg>
      <div className="w-[5px] shrink-0 border-r border-[#26292c] pt-[19px]">
        <div className="h-[9px] bg-[#d8d8d8]" />
      </div>
      <InkscapeWindow
        id="left"
        title="output4_regions2.svg - Inkscape"
        filled
        x="271,85"
        y="168,89"
        hint="Drag to select objects to edit, click to edit this object (more: Shift)"
      />
      <InkscapeWindow
        id="right"
        title="output3_regions1.svg - Inkscape"
        filled={false}
        x="324,11"
        y="130,35"
        hint="No objects selected. Click, Shift+click, Alt+scroll mouse on top of objects, or drag around objects to select."
      />
    </main>
  );
}
